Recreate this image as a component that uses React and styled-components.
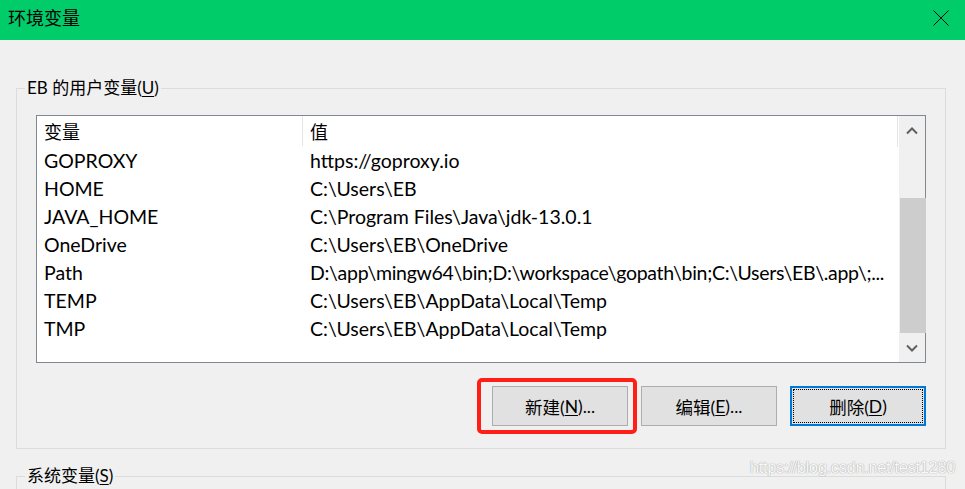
import React from "react";
import styled, { createGlobalStyle } from "styled-components";

const Global = createGlobalStyle`
  html, body { margin: 0; padding: 0; background: #f0f0f0; }
  body { width: 965px; height: 489px; overflow: hidden; }
  #root { width: 965px; height: 489px; }
`;

const UI_FONT = `Lato, "Noto Sans CJK SC", sans-serif`;

const Window = styled.div`
  position: relative;
  width: 965px;
  height: 489px;
  background: #f0f0f0;
  font-family: ${UI_FONT};
  color: #000;
  display: flex;
  flex-direction: column;
  overflow: hidden;
`;

const TitleBar = styled.div`
  height: 40px;
  flex: none;
  background: #00cc6a;
  display: flex;
  align-items: center;
  justify-content: space-between;
  padding: 0 16px 0 8px;
`;

const Title = styled.span`
  font-size: 18px;
  line-height: 20px;
  margin-top: -4px;
`;

const CloseButton = styled.span`
  width: 16px;
  height: 16px;
  display: flex;
  margin-top: -4px;
`;

const Body = styled.div`
  padding: 38px 19px 0 16px;
  display: flex;
  flex-direction: column;
  gap: 17px;
`;

const Group = styled.fieldset`
  margin: 0;
  border: 1px solid #dcdcdc;
  padding: ${(p) => p.$pad || "0 19px 22px 19px"};
  min-width: 0;
`;

const Legend = styled.legend`
  font-size: 17px;
  line-height: 20px;
  padding: 0 2px;
  margin-left: -11px;
  color: #000;
`;

const U = styled.span`
  text-decoration: underline;
  text-underline-offset: 2px;
  text-decoration-thickness: 1px;
`;

const ListBox = styled.div`
  margin-top: 17px;
  height: 246px;
  border: 1px solid #828790;
  background: #fff;
  display: flex;
`;

const ListContent = styled.div`
  flex: 1;
  min-width: 0;
  display: flex;
  flex-direction: column;
`;

const HeaderRow = styled.div`
  height: 31px;
  display: grid;
  grid-template-columns: 266px 1fr;
  border-right: 1px solid #e5e5e5;
  margin-right: 1px;
`;

const HeaderCell = styled.div`
  font-size: 18px;
  padding-left: 7px;
  display: flex;
  align-items: center;
  border-right: ${(p) => (p.$sep ? "1px solid #e5e5e5" : "none")};
  margin-bottom: 1px;
`;

const Row = styled.div`
  height: 28px;
  display: grid;
  grid-template-columns: 266px 1fr;
  align-items: center;
  padding-bottom: 1px;
  box-sizing: border-box;
`;

const Cell = styled.div`
  font-size: 19.5px;
  padding-left: 7px;
  padding-right: 8px;
  white-space: nowrap;
  overflow: hidden;
  letter-spacing: ${(p) => (p.$tight ? "-0.3px" : "0")};
`;

const ScrollBar = styled.div`
  width: 26px;
  flex: none;
  background: #f0f0f0;
  display: flex;
  flex-direction: column;
  align-items: center;
`;

const ArrowBox = styled.div`
  height: 32px;
  width: 100%;
  display: flex;
  align-items: center;
  justify-content: center;
`;

const Track = styled.div`
  flex: 1;
  width: 100%;
  padding: 53px 1px 0 2px;
  display: flex;
  flex-direction: column;
`;

const Thumb = styled.div`
  height: 135px;
  background: #cdcdcd;
`;

const ButtonRow = styled.div`
  margin-top: 23px;
  display: flex;
  justify-content: flex-end;
  gap: 13px;
`;

const Highlight = styled.span`
  position: relative;
  display: flex;
  &::after {
    content: "";
    position: absolute;
    left: -15px;
    right: -9px;
    top: -8px;
    bottom: -8px;
    border: 4px solid #ff1f17;
    border-radius: 5px;
    pointer-events: none;
  }
`;

const Button = styled.button`
  width: 136px;
  height: 40px;
  box-sizing: border-box;
  background: #e1e1e1;
  border: ${(p) => (p.$focused ? "2px solid #0078d7" : "1px solid #adadad")};
  font-family: ${UI_FONT};
  font-size: 17.5px;
  color: #000;
  padding: 0;
  position: relative;
  display: flex;
  align-items: center;
  justify-content: center;
  ${(p) =>
    p.$focused &&
    `&::before {
      content: "";
      position: absolute;
      inset: 1px;
      border: 1px dotted #000;
    }`}
`;

const Watermark = styled.div`
  position: absolute;
  left: 750px;
  top: 458px;
  font-family: "Liberation Sans", Arial, sans-serif;
  font-size: 16.5px;
  letter-spacing: -0.35px;
  color: #f8f8f8;
  text-shadow: 0 0 1px #a0a0a0, 0 0 1px #b8b8b8;
  white-space: nowrap;
`;

const rows = [
  ["GOPROXY", "https://goproxy.io"],
  ["HOME", "C:\\Users\\EB"],
  ["JAVA_HOME", "C:\\Program Files\\Java\\jdk-13.0.1"],
  ["OneDrive", "C:\\Users\\EB\\OneDrive"],
  ["Path", "D:\\app\\mingw64\\bin;D:\\workspace\\gopath\\bin;C:\\Users\\EB\\.app\\;...", true],
  ["TEMP", "C:\\Users\\EB\\AppData\\Local\\Temp"],
  ["TMP", "C:\\Users\\EB\\AppData\\Local\\Temp"],
];

const Chevron = ({ up }) => (
  <svg width="12" height="8" viewBox="0 0 12 8">
    <path
      d={up ? "M1 6.5 L6 1.5 L11 6.5" : "M1 1.5 L6 6.5 L11 1.5"}
      fill="none"
      stroke="#606060"
      strokeWidth="2"
    />
  </svg>
);

export default function App() {
  return (
    <Window>
      <Global />
      <TitleBar>
        <Title>环境变量</Title>
        <CloseButton>
          <svg width="16" height="16" viewBox="0 0 16 16">
            <path d="M0.5 0.5 L15.5 15.5 M15.5 0.5 L0.5 15.5" stroke="#000" strokeWidth="1" />
          </svg>
        </CloseButton>
      </TitleBar>
      <Body>
        <Group>
          <Legend>
            EB 的用户变量(<U>U</U>)
          </Legend>
          <ListBox>
            <ListContent>
              <HeaderRow>
                <HeaderCell $sep>变量</HeaderCell>
                <HeaderCell>值</HeaderCell>
              </HeaderRow>
              {rows.map(([k, v, tight]) => (
                <Row key={k}>
                  <Cell>{k}</Cell>
                  <Cell $tight={tight}>{v}</Cell>
                </Row>
              ))}
            </ListContent>
            <ScrollBar>
              <ArrowBox>
                <Chevron up />
              </ArrowBox>
              <Track>
                <Thumb />
              </Track>
              <ArrowBox>
                <Chevron />
              </ArrowBox>
            </ScrollBar>
          </ListBox>
          <ButtonRow>
            <Highlight>
              <Button>
                新建(<U>N</U>)...
              </Button>
            </Highlight>
            <Button>
              编辑(<U>E</U>)...
            </Button>
            <Button $focused>
              删除(<U>D</U>)
            </Button>
          </ButtonRow>
        </Group>
        <Group $pad="0 19px 40px 19px">
          <Legend>
            系统变量(<U>S</U>)
          </Legend>
        </Group>
      </Body>
      <Watermark>https://blog.csdn.net/test1280</Watermark>
    </Window>
  );
}
